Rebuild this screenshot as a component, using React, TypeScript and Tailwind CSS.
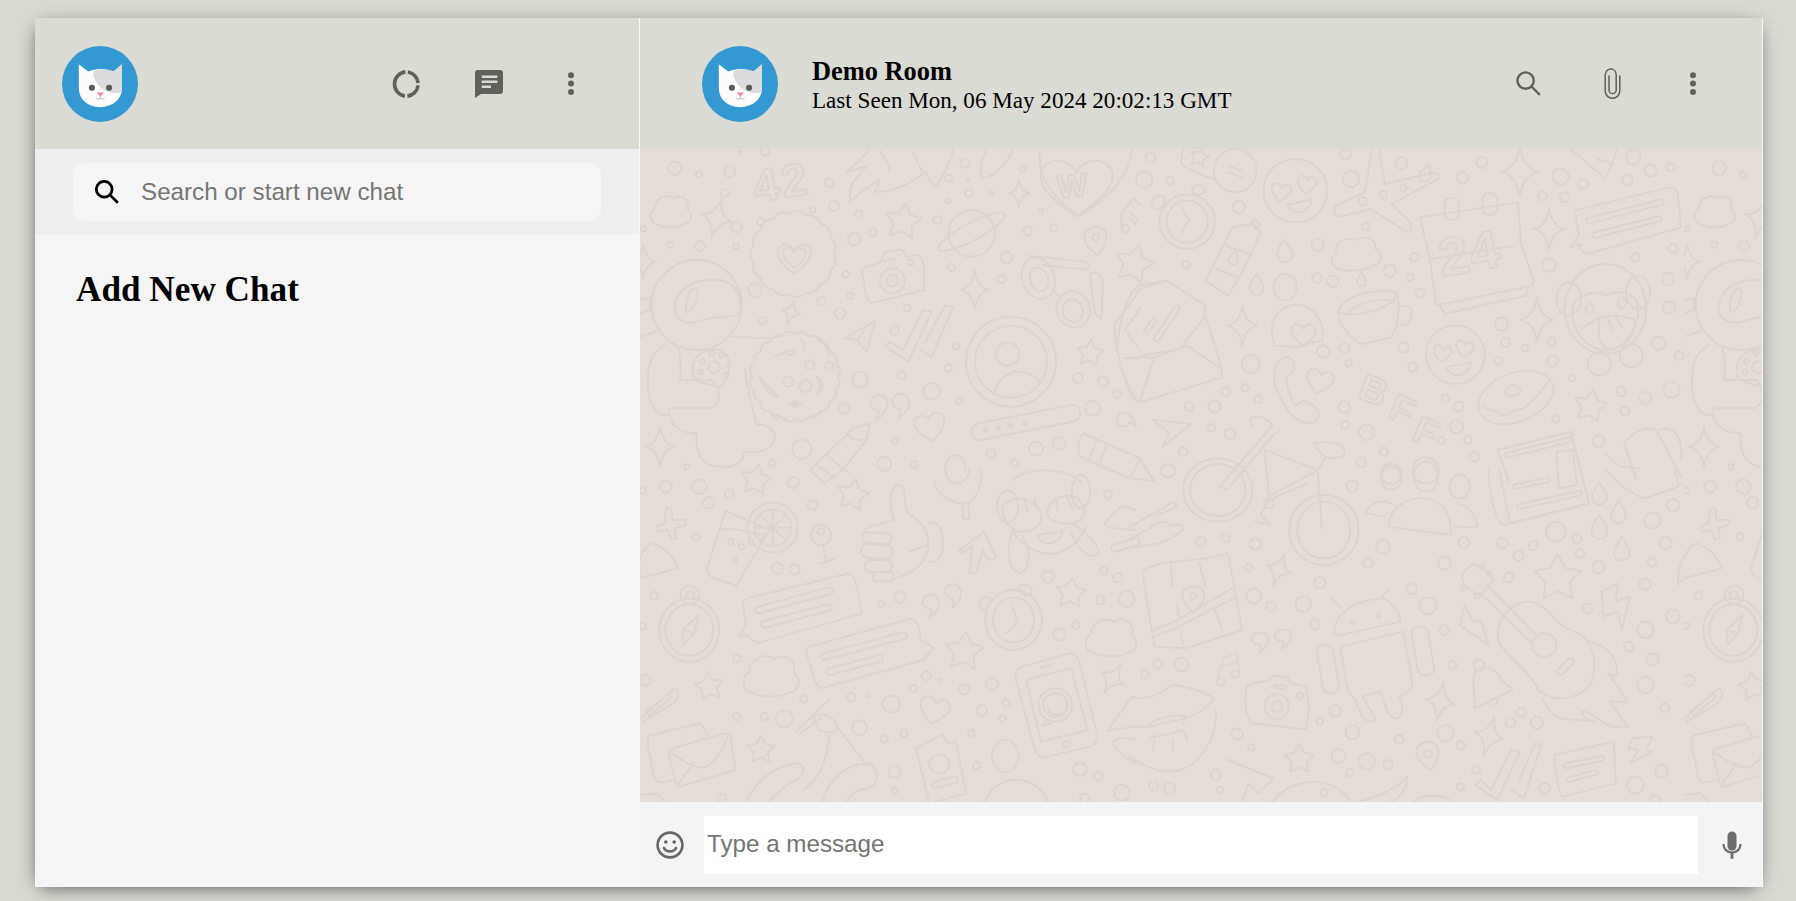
import React from "react";

const AY = 3 / 2.45;
const f = (n: number) => n.toFixed(1);

function shape(d: string, cx: number, cy: number, s: number, ay = 1, rot = 0) {
  const a = (rot * Math.PI) / 180;
  return d.replace(/(-?[\d.]+),(-?[\d.]+)/g, (_, xs, ys) => {
    const x = parseFloat(xs) * s;
    const y = parseFloat(ys) * s;
    return `${f(cx + x * Math.cos(a) - y * Math.sin(a))},${f(cy + (x * Math.sin(a) + y * Math.cos(a)) * ay)}`;
  });
}
const HEART = "M0,1 C-.5,.6 -1,.2 -1,-.3 C-1,-.8 -.3,-1 0,-.4 C.3,-1 1,-.8 1,-.3 C1,.2 .5,.6 0,1Z";
const DROP = "M0,-1 C.3,-.4 .65,-.1 .65,.35 C.65,.8 .3,1 0,1 C-.3,1 -.65,.8 -.65,.35 C-.65,-.1 -.3,-.4 0,-1Z";
const COMMA = "M-.1,1 C.2,.7 .5,.4 .5,-.1 C.5,-.6 .2,-.8 -.1,-.8 C-.5,-.8 -.7,-.5 -.7,-.2 C-.7,.2 -.3,.3 -.05,.3 C0,.5 -.05,.8 -.1,1Z";
const CLOUD = "M-.7,.65 C-1.05,.55 -1.05,0 -.75,-.1 C-.8,-.6 -.2,-.85 .1,-.6 C.5,-.85 .95,-.5 .8,-.1 C1.1,.15 1,.6 .65,.65 C.3,.85 -.3,.85 -.7,.65Z";
const SPARK = "M0,-1 Q.12,-.12 .75,0 Q.12,.12 0,1 Q-.12,.12 -.75,0 Q-.12,-.12 0,-1Z";
const PIN = "M0,1 C-.45,.6 -.75,.1 -.7,-.35 C-.6,-1 .6,-1 .7,-.35 C.75,.1 .45,.6 0,1Z";

const heart = (x: number, y: number, s: number, ay = 1, r = 0) => shape(HEART, x, y, s, ay, r);
const drop = (x: number, y: number, s: number, ay = 1, r = 0) => shape(DROP, x, y, s, ay, r);
const comma = (x: number, y: number, s: number, ay = 1, r = 0) => shape(COMMA, x, y, s, ay, r);
const cloud = (x: number, y: number, s: number, ay = 1, r = 0) => shape(CLOUD, x, y, s, ay, r);
const spark = (x: number, y: number, s: number, ay = 1, r = 0) => shape(SPARK, x, y, s, ay, r);
const pin = (x: number, y: number, s: number, ay = 1, r = 0) => shape(PIN, x, y, s, ay, r);

function star(cx: number, cy: number, R: number, ay = 1, rot = 0) {
  let d = "";
  for (let i = 0; i < 10; i++) {
    const r = i % 2 ? R * 0.52 : R;
    const a = ((rot - 90 + i * 36) * Math.PI) / 180;
    d += `${i ? "L" : "M"}${f(cx + r * Math.cos(a))},${f(cy + r * Math.sin(a) * ay)} `;
  }
  return d + "Z";
}
function ell(cx: number, cy: number, rx: number, ry: number, rot = 0) {
  const a = (rot * Math.PI) / 180;
  const dx = rx * Math.cos(a);
  const dy = rx * Math.sin(a);
  return `M${f(cx - dx)},${f(cy - dy)} A${f(rx)},${f(ry)} ${rot} 1,0 ${f(cx + dx)},${f(cy + dy)} A${f(rx)},${f(ry)} ${rot} 1,0 ${f(cx - dx)},${f(cy - dy)}Z`;
}
function dots(list: number[][], ay = 1) {
  return list.map(([x, y, r]) => ell(x, y, r, r * ay)).join(" ");
}
function capsule(x1: number, y1: number, x2: number, y2: number, w: number) {
  const len = Math.hypot(x2 - x1, y2 - y1);
  const nx = ((y2 - y1) / len) * (w / 2);
  const ny = (-(x2 - x1) / len) * (w / 2);
  const ex = ((x2 - x1) / len) * (w / 2);
  const ey = ((y2 - y1) / len) * (w / 2);
  return `M${f(x1 + nx)},${f(y1 + ny)} L${f(x2 + nx)},${f(y2 + ny)} Q${f(x2 + nx + ex)},${f(y2 + ny + ey)} ${f(x2 + ex)},${f(y2 + ey)} Q${f(x2 - nx + ex)},${f(y2 - ny + ey)} ${f(x2 - nx)},${f(y2 - ny)} L${f(x1 - nx)},${f(y1 - ny)} Q${f(x1 - nx - ex)},${f(y1 - ny - ey)} ${f(x1 - ex)},${f(y1 - ey)} Q${f(x1 + nx - ex)},${f(y1 + ny - ey)} ${f(x1 + nx)},${f(y1 + ny)}Z`;
}
function scallop(cx: number, cy: number, R: number, n: number) {
  let d = "";
  for (let i = 0; i <= n; i++) {
    const a = (i / n) * Math.PI * 2;
    const x = cx + R * Math.cos(a);
    const y = cy + R * Math.sin(a);
    if (i === 0) d += `M${f(x)},${f(y)} `;
    else {
      const m = ((i - 0.5) / n) * Math.PI * 2;
      d += `Q${f(cx + R * 1.14 * Math.cos(m))},${f(cy + R * 1.14 * Math.sin(m))} ${f(x)},${f(y)} `;
    }
  }
  return d + "Z";
}

const Z7 = [
  dots([[105,55,20],[177,73,10],[269,65,17],[255,130,12],[568,98,13],[518,180,8],[582,168,15],[656,193,11],[362,215,11],[290,231,16],[10,236,8],[91,284,9],[180,288,15],[288,288,9],[643,268,19],[698,247,12],[892,210,12],[975,40,14],[926,85,11],[985,88,4],[987,130,12],[1053,130,6],[925,153,7],[1150,57,8],[1202,183,7],[1163,243,13],[1242,233,11],[1100,323,17],[934,352,11],[1084,387,12],[618,373,10],[631,437,9],[545,454,13],[600,489,16],[368,513,11],[345,421,21],[802,474,10],[763,541,13],[948,590,9],[926,654,11],[785,676,12],[660,688,23],[875,724,25],[957,752,10],[611,775,16],[765,872,9],[486,898,29],[1358,775,22],[1314,684,14],[1389,694,15],[1432,732,12],[1188,896,21],[1258,880,19],[1054,911,13],[1124,938,11],[823,944,10],[733,942,21],[398,940,10],[141,950,8],[298,8,5],[375,5,12]]),
  cloud(92, 182, 62),
  spark(230, 205, 62, 1, 15),
  scallop(460, 312, 122, 15),
  heart(463, 322, 50),
  heart(463, 320, 34),
  star(790, 215, 56, 1, 8),
  ell(995, 250, 70, 70),
  ell(995, 245, 112, 26, -28),
  "M630,155 C625,110 640,90 680,50 L620,65 C650,40 670,20 690,0 M630,155 C660,130 680,110 720,90 L705,125 C760,130 810,100 850,70 L815,0 M720,0 C730,30 760,40 745,65 M860,70 C850,50 870,100 885,110 C910,90 930,30 940,0",
  "M1040,0 C1020,30 1015,70 1030,82 C1060,85 1100,40 1120,0",
  "M1200,0 C1190,80 1240,150 1320,197 C1400,150 1470,80 1475,0",
  heart(1310, 105, 108, 0.88),
  spark(1137, 130, 42),
  "M1445,190 L1480,145 L1500,165 M1445,190 L1445,240 M1445,240 A12,12 0 1,0 1445,232",
  pin(1367, 270, 47, 1, -8),
  ell(1367, 262, 10, 10),
  "M682,350 L720,338 L735,305 L785,298 L800,320 L835,315 C850,320 855,350 852,420 L700,458 C685,458 680,445 678,430 L665,365 C665,355 672,352 682,350Z",
  ell(757, 392, 37, 37),
  ell(757, 392, 17, 17),
  ell(812, 337, 9, 9),
  "M730,335 L768,325",
  "M1165,318 L1340,335 C1352,350 1345,360 1335,358 L1205,345",
  ell(1195, 385, 48, 62, -20),
  ell(1197, 388, 27, 36, -20),
  ell(1300, 478, 50, 55, -20),
  ell(1298, 482, 30, 34, -20),
  "M1235,420 L1262,442 M1350,370 C1372,362 1385,378 1388,400 L1385,510 L1365,490 Z",
  ell(170, 465, 135, 135),
  "M105,470 C110,410 170,385 235,390 C290,395 305,440 300,490 C270,510 230,495 190,510 C140,530 100,510 105,470Z",
  ell(155, 450, 14, 35, 18),
  "M0,450 L30,445 L30,480 L0,490 M0,560 L60,540",
  "M75,585 C30,610 20,650 25,720 C30,770 50,800 85,795 M120,690 L215,690 C245,720 245,760 210,775 L90,775 M85,780 C90,830 120,850 170,850 C165,900 180,950 240,950 C290,955 315,930 310,905 C350,915 400,900 405,860 C400,830 370,820 350,825 C340,780 320,720 315,660 M115,590 C120,620 125,660 120,690",
  "M240,600 C180,590 150,630 160,680 C175,700 215,705 240,712 C270,690 285,620 240,600Z",
  ell(222, 652, 17, 17),
  dots([[215,610,7],[245,616,7],[265,645,7],[258,675,7],[188,635,7],[182,665,7]]),
  "M275,560 C320,560 370,570 420,560",
  scallop(465, 680, 128, 20),
  "M405,620 L450,600 C470,605 465,620 440,612 M480,565 C495,580 500,595 490,598 M540,565 C560,590 570,610 565,615 M360,680 C370,720 395,740 415,742 C395,720 380,710 360,680 M530,680 C550,690 555,720 530,735 C545,710 540,695 530,680 M400,790 L440,808 M505,800 L540,790 M445,760 L485,765",
  dots([[510,645,14],[568,648,12],[445,695,15],[496,708,18],[465,762,8]]),
  spark(60, 890, 62),
  spark(10, 335, 52),
  "M612,565 L705,515 L680,605 L650,570 Z M650,570 L670,545",
  "M735,590 L805,635 L875,485 L850,480 L790,600 L750,575 Z M840,600 L875,620 L940,470 L915,465 L855,580",
  ell(1113, 635, 135, 135),
  ell(1113, 635, 108, 108),
  ell(1103, 612, 35, 35),
  "M1060,735 C1070,690 1110,660 1140,665 C1170,670 1190,680 1195,695",
  star(1350, 610, 42, 1, 5),
  spark(1005, 420, 58),
  spark(453, 487, 38, 1, 15),
  comma(720, 770, 42, 1, 10),
  comma(785, 765, 42, 1, 10),
  heart(870, 828, 46, 1, -12),
  capsule(1020, 845, 1295, 790, 50),
  dots([[1037,840,5],[1075,833,5],[1113,826,5],[1155,820,5]]),
  "M510,960 L640,835 L690,820 L680,870 L608,960 L553,1000 L510,960Z M620,850 C630,865 660,875 672,868 M530,945 L585,985 M560,915 L620,965",
  "M915,960 C915,900 975,900 975,960",
  comma(1460, 810, 35, 1, -60),
  "M1330,850 L1500,925 L1542,993 L1470,985 L1320,920 C1310,900 1315,865 1330,850Z M1370,870 L1345,935 M1400,885 L1375,950 M1500,925 L1470,985",
  "M1500,420 L1425,520 C1420,560 1440,680 1490,750 M1500,475 L1455,540 L1500,600 M1450,625 L1500,625",
].join(" ");

const Z8 = [
  dots([[50,25,12],[35,92,20],[98,95,10],[528,15,13],[665,42,15],[541,90,20],[862,40,14],[815,87,14],[1055,83,20],[1110,105,12],[1218,93,13],[1275,65,15],[1325,55,10],[1233,25,18],[1065,145,12],[1010,140,11],[267,175,15],[578,232,10],[620,137,9],[670,118,8],[570,157,10],[460,288,15],[137,347,9],[697,325,10],[636,365,15],[685,385,9],[710,432,11],[458,387,12],[497,397,14],[1026,348,17],[1238,325,10],[1330,298,11],[1318,390,15],[1320,475,15],[910,525,16],[920,580,11],[968,598,8],[1033,578,10],[903,636,9],[1035,635,13],[1295,583,16],[1345,620,11],[692,655,11],[670,595,13],[473,607,15],[526,597,12],[536,642,8],[296,645,22],[234,728,11],[282,716,9],[207,772,15],[145,772,11],[314,750,9],[200,836,9],[245,855,13],[130,908,11],[525,775,14],[527,828,10],[580,850,19],[773,748,9],[805,773,12],[800,833,16],[763,876,9],[828,873,10],[844,923,12],[622,908,10],[566,940,12],[1082,688,8],[1203,727,12],[1262,747,15],[1327,723,20],[1212,786,11],[1043,810,9],[1148,876,14],[93,965,17],[640,975,25],[725,965,32]], AY),
  "M130,0 L125,40 C130,60 190,85 215,95",
  ell(258, 65, 52, 65),
  "M240,50 L275,65 M240,70 L275,85",
  star(170, 25, 24, AY, 15),
  ell(405, 125, 78, 95),
  heart(370, 128, 24, AY, 10),
  heart(433, 105, 24, AY, 10),
  "M385,168 L445,150 C445,190 400,205 385,168Z",
  "M590,0 C590,40 580,100 575,130 L505,170 C495,185 500,205 515,203 L590,180 L680,250 C695,250 690,220 680,210 L640,165 L755,90 C765,70 745,70 730,75 L625,105 L610,0",
  drop(725, 72, 22, AY, 25),
  ell(140, 218, 68, 82),
  ell(140, 218, 50, 63),
  "M130,180 L145,215 L125,250",
  ell(70, 160, 15, 20, 25),
  ell(168, 122, 16, 14),
  "M185,395 L250,235 L300,225 L320,250 L275,370 L240,440 L185,395Z M235,290 L300,320 M210,360 L265,385 M290,232 L305,210 L320,225 L305,240",
  drop(255, 325, 18, AY, 15),
  drop(378, 305, 28, AY, -8),
  drop(310, 405, 26, AY),
  drop(567, 390, 17, AY),
  ell(380, 415, 28, 40),
  "M0,190 L20,215 L12,225 L0,205",
  cloud(552, 313, 62, AY * 0.85, -8),
  star(10, 345, 50, AY, 15),
  "M710,205 L950,160 L958,285 L990,395 L985,410 L750,470 L735,330 L710,205Z M740,330 L940,290 M770,495 L970,440 L975,420 M770,495 L760,470",
  capsule(788, 165, 788, 195, 35),
  capsule(882, 150, 882, 180, 35),
  spark(955, 68, 62, AY),
  spark(1027, 240, 52, AY),
  spark(275, 530, 50, AY),
  spark(997, 512, 55, AY),
  spark(1408, 893, 58, AY),
  "M1090,185 L1320,115 C1335,112 1340,125 1342,135 L1350,235 L1120,315 C1105,310 1100,295 1105,285 L1078,295 L1100,260 Z",
  capsule(1125, 215, 1300, 160, 16),
  capsule(1140, 258, 1295, 210, 16),
  ell(1075, 450, 30, 50),
  ell(1245, 430, 30, 50),
  ell(1165, 480, 100, 135),
  "M1085,470 C1100,430 1150,425 1165,440 C1190,420 1240,430 1245,470 C1250,540 1210,600 1170,605 C1120,605 1075,540 1085,470Z",
  ell(1126, 480, 10, 16),
  ell(1205, 462, 10, 16),
  "M1105,540 L1150,505 L1195,500 L1235,510 C1240,560 1210,600 1175,600 C1150,590 1145,560 1150,510 M1170,510 L1185,545 M1190,505 L1205,535",
  ell(1150, 645, 28, 35),
  ell(1228, 620, 28, 35),
  "M1080,0 L1165,90 L1195,0 M1145,30 L1185,45",
  "M90,395 L20,410 C0,430 -30,500 -30,600 M0,430 L90,395 L185,470 L180,510 L120,600 L30,620 M0,625 L60,625 L140,590 L225,660 L225,685 L25,760 C10,755 0,740 -10,700 M60,625 L25,755 M185,500 L225,660",
  capsule(40, 548, 60, 512, 12),
  capsule(65, 570, 115, 478, 14),
  "M355,590 C335,520 360,470 410,467 C450,470 480,520 470,575 L400,595 Z",
  heart(425, 555, 30, AY),
  "M510,490 C520,440 600,415 650,430 C665,470 560,510 510,490Z M510,490 C510,530 550,580 570,585 L640,565 C660,530 660,470 655,430 M660,475 C690,460 700,490 680,525 L655,530 M530,495 C570,455 600,450 640,455",
  ell(797, 617, 72, 88),
  heart(765, 612, 22, AY, 10),
  heart(820, 598, 22, AY, 10),
  "M775,655 L835,640 C835,680 790,695 775,655Z",
  "M380,625 C350,640 345,690 365,740 C385,790 410,825 440,822 C465,815 470,790 450,770 L425,755 L405,770 C390,740 380,700 385,680 L400,665 C410,640 395,620 380,625Z",
  heart(465, 695, 33, AY, 15),
  ell(945, 745, 100, 70, -33),
  ell(938, 725, 20, 15, -25),
  "M862,770 C880,790 900,780 910,800 C930,805 930,780 960,780 C990,760 1010,720 1030,690",
  star(1128, 772, 42, AY, 10),
  "M55,812 L150,825 L80,895 L95,850 Z",
  "M900,903 L1080,850 L1125,1063 L915,1128 M900,903 L930,1000",
  "M1215,875 C1240,840 1280,830 1290,845 L1350,985 M1210,880 L1240,990 M1300,840 C1340,830 1355,880 1350,930",
].join(" ");

const Z10 = [
  dots([[173,215,12],[235,203,10],[308,222,14],[290,293,9],[465,338,14],[303,378,19],[345,410,12],[425,402,19],[453,463,12],[125,583,17],[68,582,12],[37,612,9],[545,48,14],[620,230,17],[583,278,12],[770,280,16],[818,217,13],[690,357,13],[730,407,21],[770,480,12],[503,723,14],[465,755,8],[545,787,17],[660,808,11],[790,585,10],[912,220,13],[988,227,11],[952,257,13],[1043,185,24],[1095,205,11],[1102,250,11],[1148,292,15],[1280,152,20],[1330,105,15],[1312,220,15],[1278,277,11],[1262,343,14],[1121,415,12],[1330,440,17],[1263,480,20],[1222,530,12],[1280,568,15],[1263,645,20],[1310,713,11],[928,323,12],[958,727,11],[932,758,12],[997,758,15],[773,790,20],[810,826,10],[262,792,14],[297,832,8],[511,858,17],[580,875,20],[632,885,12],[538,908,9],[210,915,12],[58,948,11],[97,955,14],[220,960,8],[848,900,10],[810,950,9],[1016,955,13],[1302,903,16],[1238,945,21],[1287,990,12]], AY),
  ell(215, 60, 85, 95),
  ell(215, 60, 68, 78),
  ell(475, 180, 85, 105),
  ell(475, 180, 65, 85),
  "M300,-130 C280,-165 320,-175 350,-135 L220,50 L238,60 L355,-110 M330,-60 L460,0 L340,80 L330,-60 M340,90 L320,135 L345,165 L305,155 M340,90 L435,40 M450,-80 C500,-90 530,-80 525,-45 C510,-30 490,-35 470,-45 L455,-70 M480,-40 L460,0 L470,175",
  ell(340, 100, 12, 14),
  "M900,-60 L1080,-115 L1125,100 L915,165 C895,160 880,60 878,0 M905,0 L930,155",
  capsule(925, -45, 1075, -90, 14),
  capsule(945, 50, 1020, 30, 14),
  capsule(955, 110, 1100, 70, 14),
  "M1045,-55 L1085,-60 L1095,45 L1050,55Z",
  "M1165,0 C1190,35 1230,75 1260,85 L1345,50 L1335,0",
  ell(640, 25, 25, 35),
  ell(725, 20, 30, 45),
  ell(808, 50, 25, 35),
  "M635,170 C630,120 680,80 720,85 C770,90 790,140 785,195 Z M640,100 C600,80 575,120 578,130 L625,140 M800,100 C840,110 850,150 850,172 L795,170",
  "M0,170 L108,95 L115,110 L60,140 M0,235 L70,220 C100,210 110,195 130,180 L125,165 L100,165 C85,150 60,155 50,175 L0,205",
  "M30,305 C60,265 170,280 240,250 L275,480 L135,535 L60,530 Z M55,480 L110,455 L250,355 M60,500 L120,470 L262,380 M100,280 L105,350 M170,280 L185,350 M115,405 L120,440 M205,410 L225,480 M125,490 L130,525",
  pin(155, 385, 38, AY * 0.9),
  ell(155, 378, 8, 10),
  spark(365, 298, 42, AY, 20),
  drop(1150, 170, 30, AY),
  drop(1197, 125, 28, AY),
  drop(1205, 235, 30, AY),
  drop(1150, 70, 28, AY),
  "M1345,345 C1335,300 1360,240 1385,215 C1420,230 1445,270 1452,295 L1345,335",
  "M500,490 C500,430 550,390 620,385 C650,400 665,440 662,455 L510,497 Z M520,415 L495,385 M615,385 L635,355",
  dots([[545,455,5],[610,437,5]], AY),
  "M515,530 L670,485 L692,640 C690,660 680,670 660,680 C675,730 665,745 650,745 C630,740 625,700 612,665 L570,680 C590,730 615,755 590,755 C570,755 560,720 552,685 C540,680 535,660 530,640 Z",
  capsule(478, 545, 492, 650, 40),
  capsule(710, 490, 725, 595, 40),
  "M875,345 L1000,500 M860,370 L985,520 M975,395 C1030,400 1040,470 1090,485 C1140,510 1145,590 1130,640 C1100,690 1040,700 1000,660 C980,600 930,570 905,520 C890,470 920,400 975,395Z",
  ell(1015, 525, 30, 35),
  capsule(1055, 605, 1078, 575, 18),
  "M835,285 C850,280 880,300 890,330 L860,375 C840,370 805,340 815,310Z",
  dots([[862,290,6],[880,312,6],[818,352,6],[850,378,6]], AY),
  "M1125,515 C1190,530 1200,600 1190,620 L1170,610 C1190,640 1215,680 1218,695 L1175,695 L1220,770 L1180,770 C1140,750 1130,720 1105,725 C1110,745 1130,755 1140,755 L1050,745 C1030,730 1020,710 1010,685",
  "M820,405 L840,455 L860,450 L878,525 L808,465 Z",
  "M1155,365 L1195,340 L1190,395 L1225,380 L1205,480 L1195,425 L1160,440 Z",
  star(1048, 325, 60, AY, 0),
  "M845,715 C845,660 835,620 850,600 C870,580 900,600 910,630 L938,660 L845,715Z",
  ell(890, 697, 10, 12),
  ell(855, 585, 13, 16),
  "M212,640 L228,565 L262,550 L268,610 M228,590 L262,575",
  ell(222, 635, 10, 10),
  ell(258, 612, 10, 10),
  comma(322, 515, 34, AY * 0.8, 5),
  comma(378, 505, 34, AY * 0.8, 5),
  "M300,640 L340,630 L350,618 L385,620 L395,640 L430,650 C440,690 440,740 430,778 L300,760 C285,750 280,700 285,660 C285,650 290,642 300,640Z",
  ell(360, 710, 30, 38),
  ell(360, 710, 13, 16),
  ell(416, 677, 8, 9),
  capsule(358, 650, 378, 652, 10),
  "M0,680 C40,690 70,680 100,645 C150,650 190,670 205,685 C190,720 140,750 100,755 L50,770 L0,770 M40,770 C60,740 120,735 135,735 L130,760 M210,725 C215,800 170,900 100,905 C60,905 20,880 0,860 M50,805 C80,790 100,795 130,780 L140,810 M60,810 L55,840 M105,810 L105,840",
  spark(760, 695, 50, AY, 10),
  spark(880, 798, 50, AY, 15),
  pin(730, 855, 38, AY, -12),
  ell(730, 853, 10, 11),
  star(415, 868, 38, AY),
  "M235,868 L352,925 L315,970 L290,940 L275,995",
  "M350,995 C380,940 450,920 500,950 C530,970 540,990 540,995",
  ell(475, 968, 8, 10),
  "M560,995 C610,980 650,960 680,920 C680,955 660,985 640,1000",
  "M845,945 L900,990 L955,845 L935,840 L885,960 L860,930Z M935,960 L965,985 L1008,825 L992,820 L950,940",
  "M1040,855 L1185,815 L1190,940 L1060,980 C1050,975 1040,900 1040,855Z",
  capsule(1068, 888, 1155, 865, 14),
  capsule(1078, 928, 1140, 908, 14),
  "M1230,805 L1280,800 L1265,840 L1280,845 L1225,880 L1245,840 L1220,835Z",
  "M695,1000 C700,970 780,970 790,1000",
  "M1165,-50 L1200,-10 L1250,-5",
].join(" ");

const Z9 = [
  dots([[90,50,18],[190,50,22],[20,62,10],[280,72,13],[218,98,17],[472,38,17],[530,105,15],[180,200,11],[424,295,17],[476,298,15],[55,377,12],[20,468,10],[792,382,17],[736,403,10],[1236,320,18],[1403,302,11],[1445,323,14],[1393,390,13],[1472,386,24],[1320,466,11],[1270,494,18],[1416,73,12],[303,565,11],[27,631,17],[503,686,11],[646,681,13],[698,677,6],[765,703,26],[832,656,11],[871,617,14],[914,630,6],[985,658,16],[1068,642,19],[1111,698,11],[1038,722,16],[1100,746,10],[303,740,11],[386,740,11],[445,746,26],[671,773,22],[745,807,11],[804,790,11],[1006,790,10],[775,906,18],[776,961,10],[1022,887,11],[1332,898,20],[1387,919,14],[1346,985,14],[1458,968,24],[258,985,13]]),
  star(360, 30, 48, 1, 10),
  star(650, 75, 50, 1, 12),
  star(220, 650, 45, 1, -8),
  star(375, 840, 43),
  star(985, 545, 60, 1, 5),
  star(1305, 370, 47, 1, 5),
  "M60,170 L85,160 L90,115 L105,115 L110,150 L150,150 L148,165 L115,175 L120,205 L105,208 L95,180 L65,185Z",
  "M10,325 L10,270 C20,240 40,220 50,220 C90,235 115,265 125,295 Z",
  "M268,122 L400,180 L300,348 L225,320 C215,310 212,300 215,290 L268,122Z M250,180 C300,170 340,190 390,195",
  ell(410, 173, 75, 75),
  ell(410, 173, 55, 55),
  "M410,118 L410,228 M355,173 L465,173 M372,135 L448,211 M448,135 L372,211",
  dots([[285,215,8],[316,230,8],[345,215,8],[297,270,6]]),
  ell(555, 195, 30, 30),
  ell(555, 185, 10, 9),
  "M560,225 L572,280 M550,282 L598,265",
  "M775,150 C755,100 765,45 790,45 C815,50 800,100 815,130 C850,150 880,180 878,230 C870,280 830,315 770,325 M775,150 C740,165 690,160 680,190 M820,245 L875,225",
  capsule(695, 203, 750, 205, 32),
  capsule(695, 243, 750, 245, 40),
  capsule(705, 288, 750, 288, 36),
  capsule(725, 320, 760, 320, 28),
  "M880,160 C900,150 920,170 920,220 C925,260 900,280 880,275",
  "M895,30 C900,80 950,100 985,100 C1020,95 1040,50 1035,0 M930,0 C930,50 990,60 1000,0 M980,100 L982,148 L1000,148 L998,100",
  "M970,240 L1045,185 L1080,265 L1058,270 L1040,240 L1020,310 L1000,310 L1010,225 L980,250Z",
  "M1130,30 C1170,-10 1290,-10 1340,40 M1130,180 C1150,225 1200,250 1240,252 C1290,250 1330,220 1350,170",
  "M1100,110 C1130,70 1190,80 1215,130 C1220,170 1190,190 1150,185 C1120,180 1100,150 1100,110Z M1235,120 C1250,70 1320,60 1345,110 C1350,150 1320,165 1280,160 C1250,155 1230,145 1235,120Z",
  "M1195,85 L1210,125 M1165,85 L1175,125 M1260,85 L1265,125 M1290,75 L1310,115",
  "M1205,195 L1280,183 C1275,225 1215,235 1205,195Z",
  ell(1115, 110, 32, 48),
  ell(1335, 65, 28, 50),
  "M1130,185 C1110,230 1115,300 1150,310 C1185,300 1185,240 1160,200 M1310,160 C1350,190 1400,230 1385,255 C1350,270 1320,220 1305,190",
  "M1405,160 C1420,150 1440,110 1470,110 L1500,120 M1500,180 L1440,175 C1420,175 1410,170 1405,160",
  capsule(1435, 235, 1500, 215, 20),
  ell(160, 480, 90, 95),
  ell(160, 480, 72, 77),
  ell(162, 375, 28, 28),
  ell(162, 375, 12, 12),
  "M188,435 L175,490 L142,525 L140,480 Z M140,480 L175,490",
  "M335,385 L630,312 C650,310 655,320 660,340 L678,430 L370,518 C350,515 340,505 340,495 L310,500 L330,460 L320,400 C320,395 325,388 335,385Z",
  capsule(368, 420, 582, 362, 20),
  capsule(385, 463, 578, 412, 20),
  "M520,530 L820,447 C835,445 845,455 850,480 L855,510 L893,533 L862,570 L555,655 C545,650 540,640 535,625 L512,550 C510,540 515,533 520,530Z",
  capsule(565, 560, 802, 497, 20),
  capsule(582, 605, 730, 565, 20),
  comma(888, 405, 40, 1, 5),
  comma(955, 375, 40, 1, 5),
  ell(1133, 450, 85, 90),
  ell(1133, 450, 62, 67),
  "M1130,410 L1145,460 L1110,490",
  ell(1048, 400, 14, 20, 30),
  ell(1168, 360, 20, 14, 15),
  cloud(1425, 500, 78, 0.95),
  "M1160,590 L1300,550 C1315,548 1325,560 1330,575 L1385,800 C1385,815 1375,825 1360,830 L1225,862 C1210,862 1200,850 1195,835 L1138,620 C1135,605 1145,595 1160,590Z",
  "M1170,630 L1305,595 L1355,780 L1215,815 Z M1215,592 L1245,585",
  ell(1292, 822, 10, 10),
  ell(1258, 705, 50, 50),
  ell(1258, 705, 36, 36),
  "M1235,715 C1240,735 1265,740 1280,725 M1232,750 L1222,768 L1245,760",
  spark(1430, 625, 52, 1, 30),
  cloud(405, 615, 85, 0.95),
  heart(895, 718, 45, 1, 15),
  "M15,745 L110,660 C130,650 130,680 120,695 L20,755 M30,725 L95,675 C105,670 108,680 100,688 L38,738",
  "M45,795 L195,760 L215,795 M45,795 C30,800 35,820 38,840 L55,925 C60,940 80,940 110,930",
  "M110,835 L265,790 C280,790 285,800 285,810 L298,900 L130,950 C125,950 120,945 118,935 L98,850 C98,845 100,838 110,835Z M105,850 C140,870 170,895 205,893 C240,880 260,840 275,800 M125,945 L170,880",
  "M480,785 L580,688 M490,792 L555,745 M530,745 C550,720 600,740 605,775 C590,795 570,790 550,780Z M580,790 C575,870 550,930 500,960 M610,780 C650,830 680,870 690,885",
  "M330,995 C370,920 430,880 490,880 C510,890 500,920 480,930 C440,950 410,980 400,995 M560,995 C580,920 640,880 700,880 C725,900 725,925 715,945 C700,960 650,950 630,1000",
  "M840,835 L920,792 L935,820 L960,815 L990,970 L880,1000 L840,835Z",
  ell(910, 882, 30, 28),
  capsule(900, 945, 955, 930, 20),
  ell(1108, 858, 40, 48),
  "M1045,1000 C1060,950 1110,925 1150,930 C1200,935 1230,970 1235,1000",
  "M1415,782 L1480,690 L1500,680 M1415,782 L1500,770 M1500,880 C1460,860 1430,830 1430,815 C1445,800 1480,805 1500,810",
  "M10,975 L60,970 C80,985 85,995 85,1000",
].join(" ");

function Tile() {
  return (
    <g fill="none">
      <path transform="translate(0,1) scale(0.3333)" d={Z7} />
      <path transform="translate(490,0) scale(0.40816,0.3333)" d={Z8} />
      <path transform="translate(490,321) scale(0.40816,0.3333)" d={Z10} />
      <path transform="translate(-4,321) scale(0.3333)" d={Z9} />
    </g>
  );
}

function Doodles() {
  return (
    <svg className="block h-full w-full [&_path]:[vector-effect:non-scaling-stroke]" stroke="#dcd4ce" strokeWidth="1.9" strokeLinejoin="round" strokeLinecap="round" aria-hidden="true">
      <defs>
        <clipPath id="tile-clip">
          <rect x="0" y="0" width="1044" height="660" />
        </clipPath>
      </defs>
      <g clipPath="url(#tile-clip)"><Tile /></g>
      <g transform="translate(1044,0)"><g clipPath="url(#tile-clip)"><Tile /></g></g>
      <g fill="none" fontFamily="'Liberation Sans', sans-serif" fontWeight="700" strokeWidth="1.8">
        <text x="116" y="54" fontSize="46" letterSpacing="3" transform="rotate(-10 116 54)">42</text>
        <text x="802" y="128" fontSize="54" letterSpacing="1" transform="rotate(-10 802 128)">24</text>
        <text x="716" y="248" fontSize="38" transform="rotate(22 716 248)">B</text>
        <text x="746" y="268" fontSize="38" transform="rotate(24 746 268)">F</text>
        <text x="770" y="290" fontSize="38" transform="rotate(24 770 290)">F</text>
        <text x="418" y="49" fontSize="32" transform="rotate(-5 418 49)">W</text>
      </g>
    </svg>
  );
}

function Cat() {
  return (
    <svg viewBox="37 34 226 226" className="h-[76px] w-[76px] shrink-0">
      <circle cx="150" cy="147" r="113" fill="#3498d3" />
      <path d="M87 88 L115 110 C135 100 170 100 190 110 L215 88 L215 160 C215 195 185 216 150 216 C115 216 88 195 87 160Z" fill="#fdfdfd" />
      <path d="M135 106 C160 100 175 105 190 110 L215 88 L215 172 C190 178 160 170 145 150 C132 132 125 115 135 106Z" fill="#dcdcdc" />
      <circle cx="126" cy="158" r="9" fill="#5a5a55" />
      <circle cx="177" cy="158" r="9" fill="#5a5a55" />
      <path d="M140 172 L162 172 L151 184Z" fill="#f47fb2" />
      <path d="M151 184 V190 M138 188 C140 193 148 193 151 190 C154 193 162 193 164 188" fill="none" stroke="#9a9a9a" strokeWidth="2" />
    </svg>
  );
}

function Dots() {
  return (
    <svg viewBox="0 0 8 26" className="h-[26px] w-2 text-[#61615c]">
      <circle cx="4" cy="4.3" r="3" fill="currentColor" />
      <circle cx="4" cy="12.6" r="3" fill="currentColor" />
      <circle cx="4" cy="21" r="3" fill="currentColor" />
    </svg>
  );
}

function Magnifier({ className, w }: { className: string; w: number }) {
  return (
    <svg viewBox="0 0 25 25" className={className} fill="none" stroke="currentColor" strokeWidth={w}>
      <circle cx="9.6" cy="9.6" r="8.2" />
      <path d="M15.5 15.5 L23.8 23.8" />
    </svg>
  );
}

export default function App() {
  return (
    <div className="flex h-[901px] w-full overflow-hidden bg-[#dadbd3] pl-[35px] pt-[18px] font-['Liberation_Serif',serif] text-black">
      <div className="flex h-[869px] w-[1728px] bg-[#f5f5f5] shadow-[-1px_4px_20px_-6px_rgba(0,0,0,0.75)]">
        <aside className="flex w-[604px] shrink-0 flex-col">
          <header className="flex h-[131px] shrink-0 items-center justify-between bg-[#dadbd3] pl-[27px] pr-[27px]">
            <Cat />
            <div className="flex items-center">
              <div className="flex w-[82px] justify-center pr-[3px]">
                <svg viewBox="0 0 28 28" className="h-7 w-7" fill="none" stroke="#61615c" strokeWidth="3.6">
                  <path d="M12.9 26.1 A12.2 12.2 0 0 1 13.4 1.9" />
                  <path d="M15.8 2 A12.2 12.2 0 0 1 26.1 13" />
                  <path d="M26.1 15.4 A12.2 12.2 0 0 1 15.4 26.1" />
                </svg>
              </div>
              <div className="flex w-[82px] justify-center">
                <svg viewBox="0 0 28 28" className="h-7 w-7">
                  <path fillRule="evenodd" fill="#61615c" d="M3 0 H25 Q28 0 28 3 V21 Q28 24 25 24 H6 L0 28 V3 Q0 0 3 0Z M6.7 5.5 V7.9 H22.3 V5.5Z M6.7 10.5 V12.9 H22.3 V10.5Z M6.7 15.5 V17.9 H16 V15.5Z" />
                </svg>
              </div>
              <div className="flex w-[82px] justify-center"><Dots /></div>
            </div>
          </header>
          <div className="flex h-[85px] shrink-0 items-center bg-[#eeeeee] pl-[38px] pr-[38px]">
            <label className="flex h-[58px] w-full items-center gap-[22px] rounded-xl bg-[#f5f5f5] pl-[22px]">
              <Magnifier className="h-6 w-6 text-black" w={2.9} />
              <input readOnly placeholder="Search or start new chat" className="min-w-0 flex-1 bg-transparent pt-[2px] font-['Liberation_Sans',sans-serif] text-[24.2px] outline-none placeholder:text-[#757575]" />
            </label>
          </div>
          <h2 className="pl-[41px] pt-[36px] text-[35.2px] font-bold leading-[40px]">Add New Chat</h2>
        </aside>
        <main className="flex min-w-0 flex-1 flex-col border-x border-x-[#f6f6f6]">
          <header className="flex h-[131px] shrink-0 items-center bg-[#dadbd3] pl-[62px] pr-[28px]">
            <Cat />
            <div className="ml-[34px] mt-[4px] flex-1">
              <div className="text-[26.4px] font-bold leading-[29px]">Demo Room</div>
              <div className="text-[23.1px] leading-[28px]">Last Seen Mon, 06 May 2024 20:02:13 GMT</div>
            </div>
            <div className="flex items-center">
              <div className="flex w-[82px] justify-center pr-[1px]"><Magnifier className="h-[25px] w-[25px] text-[#61615c]" w={2.4} /></div>
              <div className="flex w-[82px] justify-center pl-[2px]">
                <svg viewBox="0 0 17 31" className="h-[31px] w-[17px]" fill="none" stroke="#61615c" strokeWidth="1.5" strokeLinecap="round">
                  <path d="M15.8 8 V23 C15.8 27 12.6 30.2 8.6 30.2 C4.4 30.2 1.2 27 1.2 23 V7 C1.2 3.4 3.8 1 6.8 1 C10 1 12.2 3.4 12.2 7 V22 C12.2 24 10.6 25.6 8.6 25.6 C6.6 25.6 5 24 5 22 V8" />
                </svg>
              </div>
              <div className="flex w-[82px] justify-center"><Dots /></div>
            </div>
          </header>
          <div className="h-[653px] shrink-0 overflow-hidden bg-[#e5ddd8]">
            <Doodles />
          </div>
          <footer className="flex flex-1 items-center bg-[#f4f4f4]">
            <div className="flex w-[64px] shrink-0 justify-center pr-1">
              <svg viewBox="0 0 28 28" className="h-7 w-7" fill="none" stroke="#666" strokeWidth="2.6" strokeLinecap="round">
                <circle cx="14" cy="14" r="12.4" />
                <circle cx="9.8" cy="11" r="1.8" fill="#666" stroke="none" />
                <circle cx="18.2" cy="11" r="1.8" fill="#666" stroke="none" />
                <path d="M8 17 C10 21.5 18 21.5 20 17" />
              </svg>
            </div>
            <input readOnly placeholder="Type a message" className="h-[58px] w-[994px] bg-white pb-[2px] pl-[3px] font-['Liberation_Sans',sans-serif] text-[24.2px] outline-none placeholder:text-[#757575]" />
            <div className="flex flex-1 justify-center pl-[3px]">
              <svg viewBox="0 0 20 28" className="h-7 w-5" fill="#6d6d6d">
                <rect x="5.5" y="0.5" width="9" height="19" rx="4.5" />
                <path d="M1.5 13 C1.5 18 5 21.5 10 21.5 C15 21.5 18.5 18 18.5 13" fill="none" stroke="#6d6d6d" strokeWidth="2.2" />
                <rect x="8.6" y="21" width="2.8" height="6.8" />
              </svg>
            </div>
          </footer>
        </main>
      </div>
    </div>
  );
}
